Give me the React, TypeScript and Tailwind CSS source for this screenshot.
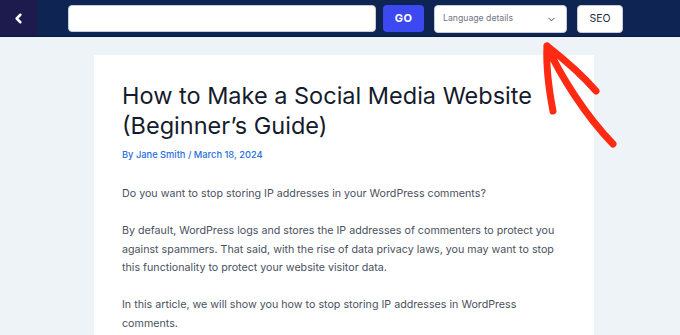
import { ChevronLeft, ChevronDown } from 'lucide-react';

export default function App() {
    return (
        <div className="w-[680px] h-[335px] overflow-hidden bg-[#eef3f8] relative" style={{ fontFamily: 'Inter, "Noto Sans", sans-serif' }}>
            {/* Top toolbar */}
            <div className="flex h-[37px] bg-[#0e2453] border-b border-[#081a3f]">
                <div className="w-[37px] h-full bg-[#1d1a4e] flex items-center justify-center">
                    <ChevronLeft className="text-white" size={15} strokeWidth={4} />
                </div>
                <div className="flex items-start pt-[5px] pl-[31px]">
                    <input className="w-[308px] h-[27px] bg-white rounded-[4px] border border-[#c6ccd8] outline-none" />
                    <button className="ml-[7px] w-[41px] h-[27px] rounded-[4px] bg-[#3c48f0] text-white text-[11px] font-bold tracking-wide">
                        GO
                    </button>
                    <div className="ml-[10px] w-[133px] h-[28px] bg-white rounded-[4px] border border-[#c6ccd8] flex items-center justify-between pl-[8px] pr-[9px] text-[8.7px] text-[#70757f]">
                        <span>Language details</span>
                        <ChevronDown size={11} strokeWidth={2} className="text-[#374151]" />
                    </div>
                    <button className="ml-[10px] w-[46px] h-[28px] bg-white rounded-[4px] border border-[#c6ccd8] text-[10.5px] text-[#1f2937]">
                        SEO
                    </button>
                </div>
            </div>

            {/* Article card */}
            <div className="ml-[94px] mt-[18px] w-[500px] h-[300px] bg-white px-[28px] pt-[26px]">
                <h1 className="text-[23.5px] leading-[30px] text-[#151b2c] font-normal">
                    How to Make a Social Media Website
                    <br />
                    (Beginner’s Guide)
                </h1>
                <p className="mt-[7px] text-[9.3px] leading-[14px] font-medium text-[#2a6fe0]">By Jane Smith / March 18, 2024</p>
                <div className="mt-[23px] text-[10.7px] leading-[18.5px] text-[#4a5160] space-y-[18.5px]">
                    <p>Do you want to stop storing IP addresses in your WordPress comments?</p>
                    <p>
                        By default, WordPress logs and stores the IP addresses of commenters to protect you
                        <br />
                        against spammers. That said, with the rise of data privacy laws, you may want to stop
                        <br />
                        this functionality to protect your website visitor data.
                    </p>
                    <p>
                        In this article, we will show you how to stop storing IP addresses in WordPress
                        <br />
                        comments.
                    </p>
                </div>
            </div>

            {/* Red annotation arrow */}
            <svg className="absolute left-0 top-0" width="680" height="335" viewBox="0 0 680 335">
                <path
                    d="M553 111 C549 90 546 65 547 46 M547 46 C565 60 583 76 596 91 M547 46 C560 75 585 115 613 144"
                    fill="none"
                    stroke="#ff2a12"
                    strokeWidth="7"
                    strokeLinecap="round"
                    strokeLinejoin="round"
                />
            </svg>
        </div>
    );
}
